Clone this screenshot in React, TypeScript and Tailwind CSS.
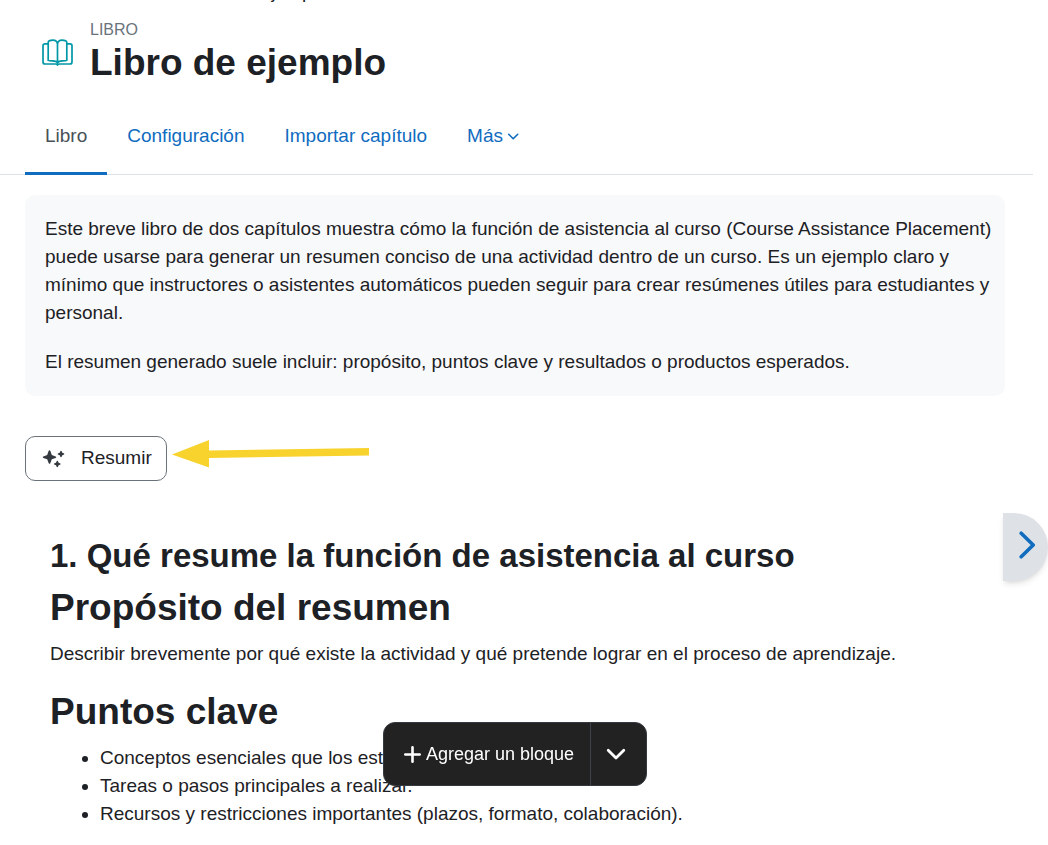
import { ReactNode, useState } from 'react';

interface Tab {
  id: string;
  label: string;
}

const tabs: Tab[] = [
  { id: 'libro', label: 'Libro' },
  { id: 'configuracion', label: 'Configuración' },
  { id: 'importar', label: 'Importar capítulo' },
];

const keyPoints = [
  'Conceptos esenciales que los estudiantes deben dominar.',
  'Tareas o pasos principales a realizar.',
  'Recursos y restricciones importantes (plazos, formato, colaboración).',
];

function BookIcon() {
  return (
    <svg
      className="w-8 h-7 shrink-0"
      viewBox="0 0 32 28"
      fill="none"
      stroke="#0097a7"
      strokeWidth="1.7"
      strokeLinecap="round"
      strokeLinejoin="round"
      aria-hidden="true"
    >
      <path d="M6.2 4.8H3Q1 4.8 1 6.8V23Q1 25 3 25H13.5Q15.5 25 15.5 26Q15.5 25 17.5 25H28Q30 25 30 23V6.8Q30 4.8 28 4.8H24.8" />
      <path d="M15.5 5Q15 1.2 11 1.2Q6.2 1.2 6.2 3.6V21.4Q7 21.9 10.5 21.9Q15 21.9 15.5 24.2Q16 21.9 20.5 21.9Q24 21.9 24.8 21.4V3.6Q24.8 1.2 20 1.2Q16 1.2 15.5 5V25.6" />
    </svg>
  );
}

function SparklesIcon() {
  return (
    <svg className="w-6 h-5" viewBox="0 0 24 20" fill="#343a40" aria-hidden="true">
      <path d="M7.5 2.2Q8.1 2.2 8.4 3L9.8 7L13.6 8.4Q14.3 8.8 14.3 9.2Q14.3 9.6 13.6 9.9L9.8 11.3L8.4 15.1Q8.1 15.9 7.5 15.9Q6.9 15.9 6.6 15.1L5.2 11.3L1.3 9.9Q0.7 9.6 0.7 9.2Q0.7 8.8 1.3 8.4L5.2 7L6.6 3Q6.9 2.2 7.5 2.2Z" />
      <path d="M19 2.7Q19.5 2.7 19.8 3.4L20.3 4.7L21.6 5.2Q22.3 5.5 22.3 6Q22.3 6.5 21.6 6.8L20.3 7.3L19.8 8.6Q19.5 9.3 19 9.3Q18.5 9.3 18.2 8.6L17.7 7.3L16.4 6.8Q15.7 6.5 15.7 6Q15.7 5.5 16.4 5.2L17.7 4.7L18.2 3.4Q18.5 2.7 19 2.7Z" />
      <path d="M15.3 12.7Q15.8 12.7 16.1 13.4L16.6 14.7L17.9 15.2Q18.6 15.5 18.6 16Q18.6 16.5 17.9 16.8L16.6 17.3L16.1 18.6Q15.8 19.3 15.3 19.3Q14.8 19.3 14.5 18.6L14 17.3L12.7 16.8Q12 16.5 12 16Q12 15.5 12.7 15.2L14 14.7L14.5 13.4Q14.8 12.7 15.3 12.7Z" />
    </svg>
  );
}

function PointerArrow() {
  return (
    <svg className="w-[197px] h-7" viewBox="0 0 197 28" fill="#f8d32e" aria-hidden="true">
      <path d="M0 14.5L37 0V10.6L197 8V15.4L37 18V27.5Z" />
    </svg>
  );
}

function SectionTitle({ children }: { children: ReactNode }) {
  return <h2 className="text-[37px] leading-[45px] font-bold mb-[10px]">{children}</h2>;
}

export default function App() {
  const [activeTab, setActiveTab] = useState('libro');

  return (
    <div className="min-h-screen bg-white text-[#1d2125] text-[19px] leading-7 font-['Liberation_Sans',Arial,sans-serif]">
      {/* Breadcrumb scrolled almost out of view */}
      <div className="h-[2px] overflow-hidden flex items-end pl-[187px]">
        <span className="leading-5">Libro de ejemplo</span>
      </div>

      <header className="flex items-center gap-4 pl-[42px] pt-[18px]">
        <BookIcon />
        <div>
          <div className="text-base leading-5 text-[#6a737b] uppercase">Libro</div>
          <h1 className="text-[37px] leading-[45px] font-bold">Libro de ejemplo</h1>
        </div>
      </header>

      <nav className="flex pl-[25px] mr-[15px] mt-3 border-b border-[#dee2e6]">
        {tabs.map((tab) => (
          <a
            key={tab.id}
            href={`#${tab.id}`}
            onClick={() => setActiveTab(tab.id)}
            className={`px-5 pt-[25px] pb-[22px] -mb-px border-b-3 ${
              activeTab === tab.id
                ? 'text-[#495057] border-[#0f6cbf]'
                : 'text-[#0f6cbf] border-transparent'
            }`}
          >
            {tab.label}
          </a>
        ))}
        <button className="flex items-center gap-1 px-5 pt-[25px] pb-[22px] -mb-px border-b-3 border-transparent text-[#0f6cbf]">
          Más
          <svg className="w-3 h-3" viewBox="0 0 12 12" fill="none" stroke="currentColor" strokeWidth="1.6" strokeLinecap="round" strokeLinejoin="round" aria-hidden="true">
            <path d="M1.7 4.3L6.2 8.8L10.7 4.3" />
          </svg>
        </button>
      </nav>

      <main className="pl-[25px] pr-[43px] pt-5 pb-4">
        <div className="bg-[#f8f9fa] rounded-[10px] p-5 pr-3 flex flex-col gap-[21px]">
          <p>
            Este breve libro de dos capítulos muestra cómo la función de asistencia al curso (Course
            Assistance Placement) puede usarse para generar un resumen conciso de una actividad
            dentro de un curso. Es un ejemplo claro y mínimo que instructores o asistentes
            automáticos pueden seguir para crear resúmenes útiles para estudiantes y personal.
          </p>
          <p>
            El resumen generado suele incluir: propósito, puntos clave y resultados o productos
            esperados.
          </p>
        </div>

        <div className="flex items-start gap-[5px] mt-10">
          <button className="flex items-center gap-[15px] pl-4 pr-3.5 pb-0.5 h-[45px] border border-[#6a737b] rounded-[10px]">
            <SparklesIcon />
            Resumir
          </button>
          <div className="pt-1">
            <PointerArrow />
          </div>
        </div>

        <article className="pl-[25px] mt-[55px]">
          <h3 className="text-[33px] leading-10 font-bold mb-[9px]">
            1. Qué resume la función de asistencia al curso
          </h3>
          <SectionTitle>Propósito del resumen</SectionTitle>
          <p className="mb-[21px]">
            Describir brevemente por qué existe la actividad y qué pretende lograr en el proceso de
            aprendizaje.
          </p>
          <SectionTitle>Puntos clave</SectionTitle>
          <ul className="list-disc pl-[50px]">
            {keyPoints.map((point) => (
              <li key={point}>{point}</li>
            ))}
          </ul>
        </article>
      </main>

      {/* Next chapter */}
      <a
        href="#siguiente"
        aria-label="Siguiente"
        className="fixed right-0 top-[513px] flex items-center justify-end w-[45px] h-[68px] pr-3 pb-1 bg-[#dee2e6] rounded-r-full shadow-md text-[#0f6cbf]"
      >
        <svg className="w-[17px] h-7" viewBox="0 0 17 28" fill="none" stroke="currentColor" strokeWidth="3.6" strokeLinecap="round" strokeLinejoin="round" aria-hidden="true">
          <path d="M2.2 2.2L14.2 14L2.2 25.8" />
        </svg>
      </a>

      {/* Floating block toolbar */}
      <div className="fixed inset-x-0 bottom-[59px] flex justify-center pr-[18px] pointer-events-none">
        <div className="flex h-16 bg-[#222222] text-white text-lg rounded-xl border border-[#343a40] overflow-hidden pointer-events-auto">
          <button className="flex items-center gap-[5px] pl-5 pr-4 border-r border-[#3d424b]">
            <svg className="w-[17px] h-[17px]" viewBox="0 0 17 17" stroke="currentColor" strokeWidth="2.6" strokeLinecap="round" aria-hidden="true">
              <path d="M8.5 1.3V15.7M1.3 8.5H15.7" />
            </svg>
            Agregar un bloque
          </button>
          <button className="flex items-center pl-[15px] pr-5" aria-label="Más opciones">
            <svg className="w-5 h-5" viewBox="0 0 20 20" fill="none" stroke="currentColor" strokeWidth="2.8" strokeLinecap="round" strokeLinejoin="round" aria-hidden="true">
              <path d="M2.2 6.2L10 14L17.8 6.2" />
            </svg>
          </button>
        </div>
      </div>
    </div>
  );
}
